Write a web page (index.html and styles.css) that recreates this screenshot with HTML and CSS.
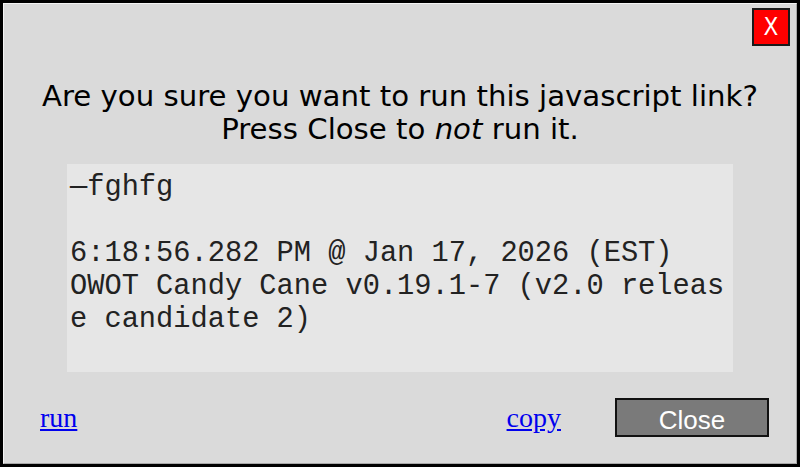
FILE: index.html
```html
<!DOCTYPE html>
<html>
<head>
<meta charset="utf-8">
<link rel="stylesheet" href="styles.css">
</head>
<body>
<div class="dialog">
  <div class="inner">
    <div class="header">
      <button class="xbtn">X</button>
    </div>
    <div class="title">Are you sure you want to run this javascript link?<br>Press Close to <i>not</i> run it.</div>
    <div class="code">—fghfg

6:18:56.282 PM @ Jan 17, 2026 (EST)
OWOT Candy Cane v0.19.1-7 (v2.0 release candidate 2)</div>
    <div class="footer">
      <a href="#" class="link">run</a>
      <span class="spacer"></span>
      <a href="#" class="link">copy</a>
      <button class="close">Close</button>
    </div>
  </div>
</div>
</body>
</html>
```
FILE: styles.css
```css
html, body {
  margin: 0;
  padding: 0;
  width: 800px;
  height: 467px;
  overflow: hidden;
}
.dialog {
  box-sizing: border-box;
  width: 800px;
  height: 467px;
  border: 3px solid #000;
  background: #dadada;
}
.inner {
  box-sizing: border-box;
  height: 100%;
  border: 1px solid;
  border-color: #f4f4f4 #a8a8a8 #a8a8a8 #f4f4f4;
  display: flex;
  flex-direction: column;
}
.header {
  display: flex;
  justify-content: flex-end;
  padding: 4px 6px 0 0;
}
.xbtn {
  box-sizing: border-box;
  width: 38px;
  height: 38px;
  background: #ff0000;
  border: 2px solid #1a1a1a;
  color: #fff;
  font-family: "DejaVu Sans", sans-serif;
  font-stretch: condensed;
  font-size: 24px;
  padding: 0;
  line-height: 34px;
  text-align: center;
}
.title {
  margin-top: 34px;
  text-align: center;
  font-family: "DejaVu Sans", sans-serif;
  font-size: 29.2px;
  line-height: 33px;
  color: #000;
}
.code {
  box-sizing: border-box;
  margin: 18px 63px 0 63px;
  height: 208px;
  background: #e6e6e6;
  padding: 7px 3px 4px 3px;
  font-family: "Liberation Mono", "Courier New", monospace;
  font-size: 28.7px;
  line-height: 33px;
  color: #222;
  white-space: pre-wrap;
  word-break: break-all;
}
.footer {
  display: flex;
  align-items: center;
  margin-top: 26px;
  padding: 0 27px 0 36px;
}
.link {
  font-family: "Liberation Serif", "Times New Roman", serif;
  font-size: 28px;
  color: #0000ee;
  text-decoration: underline;
}
.spacer {
  flex: 1;
}
.close {
  box-sizing: border-box;
  margin-left: 54px;
  width: 154px;
  height: 39px;
  background: #7a7a7a;
  border: 2px solid #111;
  color: #fff;
  font-family: "Liberation Sans", Arial, sans-serif;
  font-size: 26px;
  line-height: 37px;
  padding: 2px 0 0 0;
}
```
